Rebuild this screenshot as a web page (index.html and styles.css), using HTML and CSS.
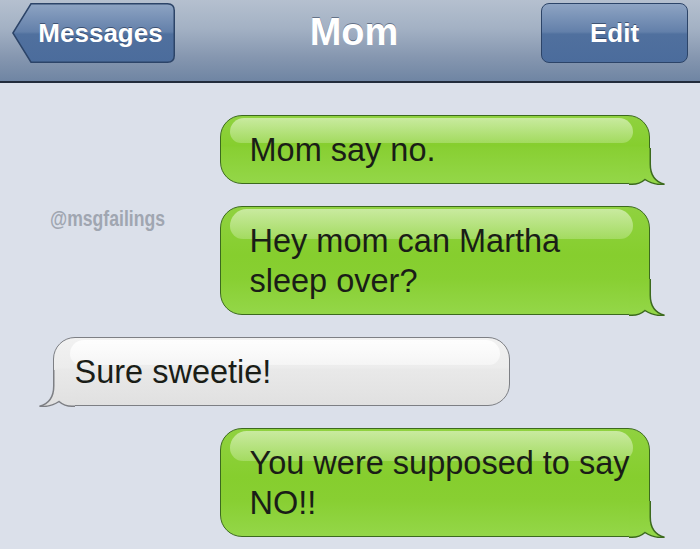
FILE: index.html
```html
<!DOCTYPE html>
<html lang="en">
<head>
<meta charset="utf-8">
<title>Mom</title>
<link rel="stylesheet" href="styles.css">
</head>
<body>
<div class="screen">
  <svg class="defs" width="0" height="0" aria-hidden="true">
    <defs>
      <linearGradient id="greenTail" gradientUnits="userSpaceOnUse" x1="0" y1="0" x2="0" y2="37">
        <stop offset="0" stop-color="#88cf32"/>
        <stop offset="1" stop-color="#94d749"/>
      </linearGradient>
      <linearGradient id="grayTail" gradientUnits="userSpaceOnUse" x1="0" y1="0" x2="0" y2="37">
        <stop offset="0" stop-color="#e9e9e9"/>
        <stop offset="1" stop-color="#e0e0e0"/>
      </linearGradient>
      <linearGradient id="btnGrad" x1="0" y1="0" x2="0" y2="1">
        <stop offset="0" stop-color="#8ea4c3"/>
        <stop offset="0.48" stop-color="#6380aa"/>
        <stop offset="0.52" stop-color="#50709e"/>
        <stop offset="1" stop-color="#4b6c9c"/>
      </linearGradient>
    </defs>
  </svg>

  <header class="navbar">
    <div class="nav-left">
      <a class="back-btn">
        <svg class="back-shape" width="163" height="60" viewBox="0 0 163 60">
          <path d="M19 0.75 H155.5 Q162.25 0.75 162.25 7.5 V52.5 Q162.25 59.25 155.5 59.25 H19 L0.9 30 Z" fill="url(#btnGrad)" stroke="#2c4468" stroke-width="1.5"/>
        </svg>
        <span class="btn-label">Messages</span>
      </a>
    </div>
    <h1 class="title">Mom</h1>
    <div class="nav-right">
      <a class="edit-btn">Edit</a>
    </div>
  </header>

  <main class="thread">
    <div class="msg sent">
      <span class="msg-text">Mom say no.</span>
      <svg class="tail" width="37" height="37" viewBox="0 0 37 37">
        <path d="M0 0 H21.25 V16 C21.25 28 27 34 35.5 36.2 C28 37 21 35 16 31.5 C12 35 8 36.25 3 36.25 H0 Z" fill="url(#greenTail)"/>
        <path d="M21.25 0 V16 C21.25 28 27 34 35.5 36.2 C28 37 21 35 16 31.5 C12 35 8 36.25 3 36.25 H0" fill="none" stroke="#3c6a1e" stroke-width="1.5"/>
      </svg>
    </div>

    <div class="row">
      <span class="watermark">@msgfailings</span>
      <div class="msg sent">
        <span class="msg-text">Hey mom can Martha<br>sleep over?</span>
        <svg class="tail" width="37" height="37" viewBox="0 0 37 37">
          <path d="M0 0 H21.25 V16 C21.25 28 27 34 35.5 36.2 C28 37 21 35 16 31.5 C12 35 8 36.25 3 36.25 H0 Z" fill="url(#greenTail)"/>
          <path d="M21.25 0 V16 C21.25 28 27 34 35.5 36.2 C28 37 21 35 16 31.5 C12 35 8 36.25 3 36.25 H0" fill="none" stroke="#3c6a1e" stroke-width="1.5"/>
        </svg>
      </div>
    </div>

    <div class="msg received">
      <span class="msg-text">Sure sweetie!</span>
      <svg class="tail tail-left" width="37" height="37" viewBox="0 0 37 37">
        <path d="M0 0 H21.25 V16 C21.25 28 27 34 35.5 36.2 C28 37 21 35 16 31.5 C12 35 8 36.25 3 36.25 H0 Z" fill="url(#grayTail)"/>
        <path d="M21.25 0 V16 C21.25 28 27 34 35.5 36.2 C28 37 21 35 16 31.5 C12 35 8 36.25 3 36.25 H0" fill="none" stroke="#7d7f84" stroke-width="1.5"/>
      </svg>
    </div>

    <div class="msg sent">
      <span class="msg-text">You were supposed to say<br>NO!!</span>
      <svg class="tail" width="37" height="37" viewBox="0 0 37 37">
        <path d="M0 0 H21.25 V16 C21.25 28 27 34 35.5 36.2 C28 37 21 35 16 31.5 C12 35 8 36.25 3 36.25 H0 Z" fill="url(#greenTail)"/>
        <path d="M21.25 0 V16 C21.25 28 27 34 35.5 36.2 C28 37 21 35 16 31.5 C12 35 8 36.25 3 36.25 H0" fill="none" stroke="#3c6a1e" stroke-width="1.5"/>
      </svg>
    </div>
  </main>
</div>
</body>
</html>
```

FILE: styles.css
```css
html, body {
  margin: 0;
  padding: 0;
}

body {
  width: 700px;
  height: 549px;
  overflow: hidden;
  background: #dbe0ea;
  font-family: "Liberation Sans", Arial, sans-serif;
}

.screen {
  width: 700px;
  height: 549px;
  display: flex;
  flex-direction: column;
  background: #dbe0ea;
}

.defs {
  position: absolute;
  width: 0;
  height: 0;
}

/* ---------- Navigation bar ---------- */
.navbar {
  height: 78px;
  border-bottom: 2px solid #222c3c;
  display: grid;
  grid-template-columns: 1fr auto 1fr;
  align-items: start;
  padding: 3px 12px 0 12px;
  box-sizing: content-box;
  background: linear-gradient(#b5c0cf 0%, #a3b1c4 35%, #8697b0 70%, #6f85a3 100%);
}

.nav-left {
  display: flex;
  justify-content: flex-start;
}

.nav-right {
  display: flex;
  justify-content: flex-end;
}

.back-btn {
  position: relative;
  width: 163px;
  height: 60px;
  display: flex;
  align-items: center;
  justify-content: center;
  box-sizing: border-box;
  padding-left: 14px;
}

.back-shape {
  position: absolute;
  left: 0;
  top: 0;
}

.btn-label {
  position: relative;
  color: #ffffff;
  font-weight: bold;
  font-size: 26px;
  text-shadow: 0 -1px 0 rgba(20, 35, 60, 0.55);
}

.edit-btn {
  width: 147px;
  height: 60px;
  box-sizing: border-box;
  border: 1.5px solid #2c4468;
  border-radius: 8px;
  background: linear-gradient(#8ea4c3 0%, #6380aa 48%, #50709e 52%, #4b6c9c 100%);
  display: flex;
  align-items: center;
  justify-content: center;
  color: #ffffff;
  font-weight: bold;
  font-size: 26px;
  text-shadow: 0 -1px 0 rgba(20, 35, 60, 0.55);
}

.title {
  margin: 0;
  height: 60px;
  line-height: 58px;
  padding: 0 4px 0 12px;
  color: #ffffff;
  font-size: 38px;
  font-weight: bold;
  text-shadow: 0 -1px 0 rgba(30, 45, 70, 0.5);
}

/* ---------- Thread ---------- */
.thread {
  display: flex;
  flex-direction: column;
  gap: 22px;
  padding: 32px 50px 0 0;
}

.row {
  display: flex;
  justify-content: space-between;
  align-items: flex-start;
}

.watermark {
  margin: 0 0 0 50px;
  width: 118px;
  color: #a0a6b1;
  font-family: "Liberation Sans", Arial, sans-serif;
  font-weight: bold;
  font-size: 22px;
  line-height: 26px;
  white-space: nowrap;
  transform: scaleX(0.8);
  transform-origin: left center;
}

.msg {
  position: relative;
  box-sizing: border-box;
  border-radius: 22px;
  font-size: 32.5px;
  line-height: 40px;
  color: #1a1d17;
  white-space: nowrap;
}

.msg-text {
  position: relative;
  z-index: 2;
}

.msg::before {
  content: "";
  position: absolute;
  top: 2px;
  left: 9px;
  right: 16px;
  height: 38%;
  max-height: 30px;
  border-radius: 18px 18px 14px 14px;
  z-index: 1;
}

.sent {
  align-self: flex-end;
  width: 430px;
  padding: 13.5px 10px 13.5px 28.5px;
  border: 1.5px solid #3c6a1e;
  background: linear-gradient(to bottom, #90d240 0%, #86ce2e 45%, #88cf32 calc(100% - 37px), #94d749 100%);
  background-origin: border-box;
}

.sent::before {
  background: linear-gradient(rgba(225, 245, 200, 0.7), rgba(195, 233, 150, 0.45));
}

.received {
  align-self: flex-start;
  margin-left: 53px;
  width: 457px;
  padding: 13.5px 10px 13.5px 20.5px;
  border: 1.5px solid #7d7f84;
  background: linear-gradient(to bottom, #f2f2f2 0%, #ececec 45%, #e9e9e9 calc(100% - 37px), #e0e0e0 100%);
  background-origin: border-box;
}

.received::before {
  left: 16px;
  right: 9px;
  background: linear-gradient(rgba(255, 255, 255, 0.9), rgba(255, 255, 255, 0.45));
}

.tail {
  position: absolute;
  right: -16.5px;
  bottom: -1.5px;
  z-index: 1;
}

.tail-left {
  right: auto;
  left: -16.5px;
  transform: scaleX(-1);
}
```
